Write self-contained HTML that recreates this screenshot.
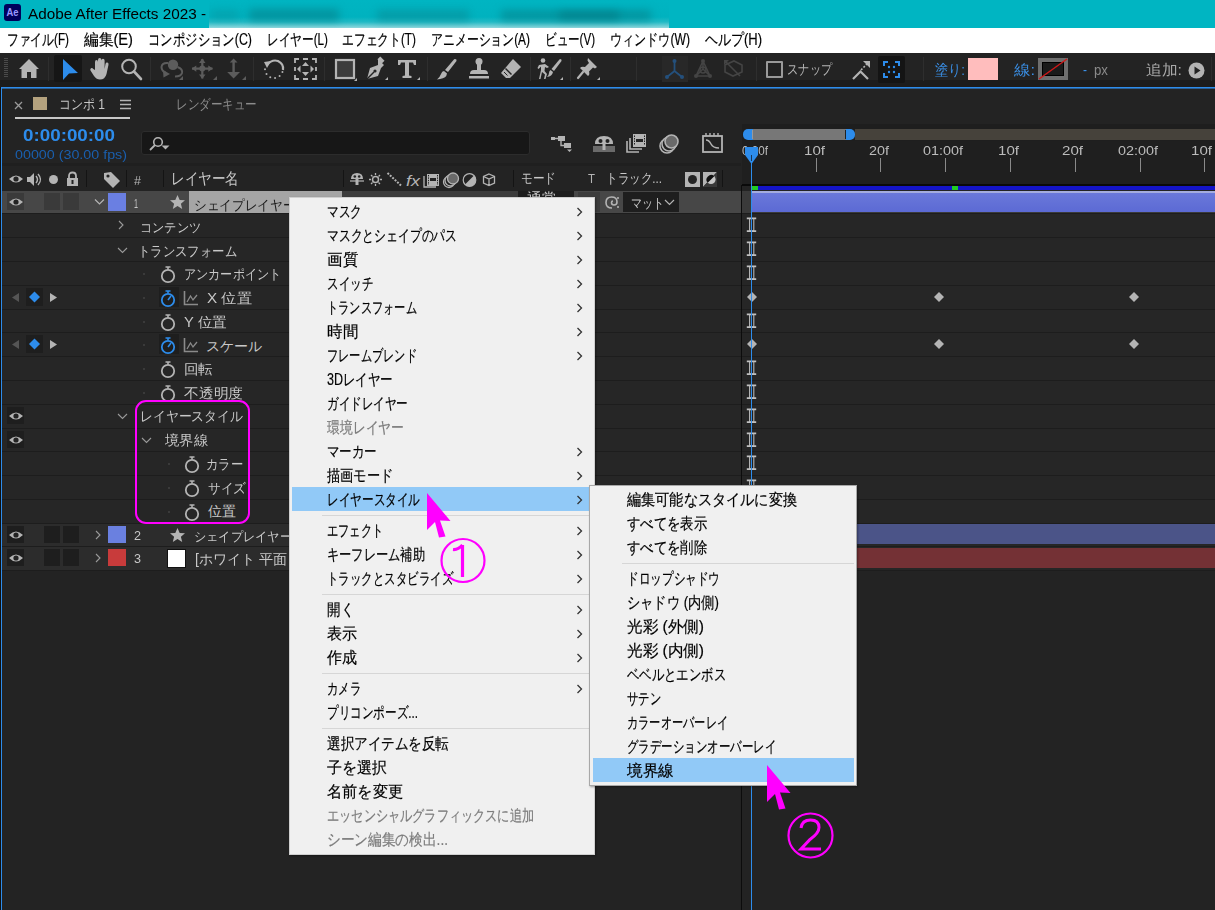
<!DOCTYPE html>
<html><head><meta charset="utf-8">
<style>
*{margin:0;padding:0;box-sizing:border-box}
html,body{width:1215px;height:910px;overflow:hidden;background:#232323;font-family:"Liberation Sans",sans-serif}
.a{position:absolute}
.t{position:absolute;white-space:nowrap;transform-origin:0 0}
svg{position:absolute;overflow:visible}
</style></head><body>
<div class="a" style="left:0px;top:0px;width:1215px;height:28px;background:#00b5c2;"></div>
<div class="a" style="left:4px;top:4px;width:17px;height:17px;background:#00005b;border-radius:3px"></div>
<svg class="a" style="left:4px;top:4px;" width="17" height="17" viewBox="0 0 17 17"><text x="8.5" y="12.3" text-anchor="middle" font-family="Liberation Sans" font-weight="bold" font-size="11" fill="#9999ff" textLength="12" lengthAdjust="spacingAndGlyphs">Ae</text></svg>
<div class="t" style="transform:scaleX(1.0181);left:28px;top:6px;font-size:15px;line-height:15px;color:#000;font-weight:normal;">Adobe After Effects 2023 -</div>
<div class="a" style="left:209px;top:0;width:460px;height:33px;overflow:hidden;background:linear-gradient(to bottom,#00b5c2 0px,#00b2bf 17px,#22bac5 22px,#7fd3d9 27px,#c8ecef 31px,#e6f6f7 33px)"><div class="a" style="left:2px;top:10px;width:28px;height:10px;background:#0a7f88;filter:blur(4px);opacity:.3"></div><div class="a" style="left:40px;top:9px;width:90px;height:12px;background:#067a84;filter:blur(4px);opacity:.55"></div><div class="a" style="left:168px;top:10px;width:92px;height:11px;background:#0a7f88;filter:blur(4px);opacity:.45"></div><div class="a" style="left:292px;top:10px;width:150px;height:11px;background:#057880;filter:blur(4px);opacity:.5"></div><div class="a" style="left:350px;top:11px;width:60px;height:9px;background:#03666e;filter:blur(4px);opacity:.4"></div></div>
<div class="a" style="left:0px;top:28px;width:1215px;height:25px;background:#ffffff;"></div>
<div class="t" style="transform:scaleX(0.7343);left:7px;top:31.5px;font-size:16px;line-height:16px;color:#000;font-weight:normal;-webkit-text-stroke:0.2px #000">ファイル(F)</div>
<div class="t" style="transform:scaleX(0.9188);left:84px;top:31.5px;font-size:16px;line-height:16px;color:#000;font-weight:normal;-webkit-text-stroke:0.2px #000">編集(E)</div>
<div class="t" style="transform:scaleX(0.7749);left:148px;top:31.5px;font-size:16px;line-height:16px;color:#000;font-weight:normal;-webkit-text-stroke:0.2px #000">コンポジション(C)</div>
<div class="t" style="transform:scaleX(0.7300);left:267px;top:31.5px;font-size:16px;line-height:16px;color:#000;font-weight:normal;-webkit-text-stroke:0.2px #000">レイヤー(L)</div>
<div class="t" style="transform:scaleX(0.7368);left:342px;top:31.5px;font-size:16px;line-height:16px;color:#000;font-weight:normal;-webkit-text-stroke:0.2px #000">エフェクト(T)</div>
<div class="t" style="transform:scaleX(0.7425);left:431px;top:31.5px;font-size:16px;line-height:16px;color:#000;font-weight:normal;-webkit-text-stroke:0.2px #000">アニメーション(A)</div>
<div class="t" style="transform:scaleX(0.7212);left:545px;top:31.5px;font-size:16px;line-height:16px;color:#000;font-weight:normal;-webkit-text-stroke:0.2px #000">ビュー(V)</div>
<div class="t" style="transform:scaleX(0.7564);left:610px;top:31.5px;font-size:16px;line-height:16px;color:#000;font-weight:normal;-webkit-text-stroke:0.2px #000">ウィンドウ(W)</div>
<div class="t" style="transform:scaleX(0.8117);left:705px;top:31.5px;font-size:16px;line-height:16px;color:#000;font-weight:normal;-webkit-text-stroke:0.2px #000">ヘルプ(H)</div>
<div class="a" style="left:0px;top:53px;width:1215px;height:27px;background:#232323;"></div>
<div class="a" style="left:0px;top:80px;width:1215px;height:7px;background:#1c1c1c;"></div>
<div class="a" style="left:48px;top:57px;width:1px;height:24px;background:#2e2e2e;"></div>
<div class="a" style="left:150px;top:57px;width:1px;height:24px;background:#2e2e2e;"></div>
<div class="a" style="left:253px;top:57px;width:1px;height:24px;background:#2e2e2e;"></div>
<div class="a" style="left:324px;top:57px;width:1px;height:24px;background:#2e2e2e;"></div>
<div class="a" style="left:427px;top:57px;width:1px;height:24px;background:#2e2e2e;"></div>
<div class="a" style="left:530px;top:57px;width:1px;height:24px;background:#2e2e2e;"></div>
<div class="a" style="left:570px;top:57px;width:1px;height:24px;background:#2e2e2e;"></div>
<div class="a" style="left:636px;top:57px;width:1px;height:24px;background:#2e2e2e;"></div>
<div class="a" style="left:756px;top:57px;width:1px;height:24px;background:#2e2e2e;"></div>
<div class="a" style="left:923px;top:57px;width:1px;height:24px;background:#2e2e2e;"></div>
<div class="a" style="left:1211px;top:57px;width:1px;height:24px;background:#2e2e2e;"></div>
<svg class="a" style="left:4px;top:57px;" width="5" height="22" viewBox="0 0 5 22"><rect x="0" y="1" width="4" height="1" fill="#4a4a4a"/><rect x="0" y="3" width="4" height="1" fill="#4a4a4a"/><rect x="0" y="5" width="4" height="1" fill="#4a4a4a"/><rect x="0" y="7" width="4" height="1" fill="#4a4a4a"/><rect x="0" y="9" width="4" height="1" fill="#4a4a4a"/><rect x="0" y="11" width="4" height="1" fill="#4a4a4a"/><rect x="0" y="13" width="4" height="1" fill="#4a4a4a"/><rect x="0" y="15" width="4" height="1" fill="#4a4a4a"/><rect x="0" y="17" width="4" height="1" fill="#4a4a4a"/><rect x="0" y="19" width="4" height="1" fill="#4a4a4a"/></svg>
<svg class="a" style="left:18px;top:58px;" width="22" height="22" viewBox="0 0 22 22"><path d="M11 1 L21 11 L18.5 11 L18.5 20 L13 20 L13 14 L9 14 L9 20 L3.5 20 L3.5 11 L1 11 Z" fill="#b4b4b4"/></svg>
<div class="a" style="left:54px;top:55px;width:28px;height:27px;background:#161616;border-radius:2px"></div>
<svg class="a" style="left:54px;top:55px;" width="28" height="27" viewBox="0 0 28 27"><path d="M9 4 L24 18 L15 18.5 L9 25 Z" fill="#2d8ceb"/></svg>
<svg class="a" style="left:89px;top:57px;" width="22" height="24" viewBox="0 0 22 24"><path d="M6 13 L6 5 Q6 3 7.5 3 Q9 3 9 5 L9 11 L9 3 Q9 1 10.7 1 Q12.4 1 12.4 3 L12.4 11 L12.4 3.5 Q12.4 1.8 14 1.8 Q15.6 1.8 15.6 3.5 L15.6 12 L16.5 7 Q17 5.3 18.4 5.6 Q19.8 6 19.5 7.8 L17.5 17 Q16 22.5 11 22.5 Q7.5 22.5 5 19 L1.5 13.5 Q0.8 12 2 11.3 Q3.3 10.7 4.3 12 Z" fill="#b4b4b4"/></svg>
<svg class="a" style="left:120px;top:57px;" width="23" height="24" viewBox="0 0 23 24"><circle cx="9" cy="9.5" r="6.8" fill="none" stroke="#b4b4b4" stroke-width="2"/><path d="M14 14.5 L21 22" stroke="#b4b4b4" stroke-width="2.6" stroke-linecap="round"/></svg>
<svg class="a" style="left:155px;top:53px;" width="32" height="30" viewBox="0 0 32 30"><circle cx="18" cy="11.7" r="5.2" fill="#5c5c5c"/><path d="M13 10 Q7 9.5 6.5 14 Q6.5 18 11 20" fill="none" stroke="#5c5c5c" stroke-width="2"/><path d="M8 17 L15 21 L8.5 24.5 Z" fill="#5c5c5c"/><path d="M22.5 14 Q28 16 27 20 Q26 23.5 20 23.5" fill="none" stroke="#5c5c5c" stroke-width="2"/><path d="M24 27 L28 27 L28 23 Z" fill="#5c5c5c"/></svg>
<svg class="a" style="left:190px;top:53px;" width="30" height="30" viewBox="0 0 30 30"><path d="M12.3 6 V25.5 M2 15.6 H22.5" stroke="#5c5c5c" stroke-width="2.2"/><path d="M12.3 5.5 L15.5 10 L9 10 Z M12.3 25.8 L15.5 21.5 L9 21.5 Z M1.8 15.6 L6.3 12.4 L6.3 18.8 Z M22.8 15.6 L18.3 12.4 L18.3 18.8 Z" fill="#5c5c5c"/><circle cx="12.3" cy="15.6" r="3" fill="#5c5c5c"/><path d="M23 27 L27 27 L27 23 Z" fill="#5c5c5c"/></svg>
<svg class="a" style="left:222px;top:53px;" width="28" height="30" viewBox="0 0 28 30"><path d="M11.6 8 V21" stroke="#5c5c5c" stroke-width="2.4"/><path d="M11.6 5.5 L15.5 9.5 L7.7 9.5 Z M11.6 25.5 L18 19 L5.2 19 Z" fill="#5c5c5c"/><path d="M20 27 L24 27 L24 23 Z" fill="#5c5c5c"/></svg>
<svg class="a" style="left:262px;top:57px;" width="25" height="24" viewBox="0 0 25 24"><path d="M5 8 Q10 2 16 4 Q22 7 21 13" fill="none" stroke="#b4b4b4" stroke-width="2.2"/><path d="M2 5 L9 4 L5 11 Z" fill="#b4b4b4"/><circle cx="20.454354415626412" cy="15.086080267099062" r="1" fill="#b4b4b4"/><circle cx="17.59448971443598" cy="19.04994218664735" r="1" fill="#b4b4b4"/><circle cx="13.084524924306299" cy="20.934416919338297" r="1" fill="#b4b4b4"/><circle cx="8.254678471075717" cy="20.183676841431136" r="1" fill="#b4b4b4"/><circle cx="4.529518182883002" cy="17.01915345652275" r="1" fill="#b4b4b4"/><circle cx="3.007783647540485" cy="12.374225961899615" r="1" fill="#b4b4b4"/></svg>
<svg class="a" style="left:294px;top:58px;" width="23" height="22" viewBox="0 0 23 22"><path d="M1 5 L1 1 L5 1 M9 1 L14 1 M18 1 L22 1 L22 5 M22 9 L22 13 M22 17 L22 21 L18 21 M14 21 L9 21 M5 21 L1 21 L1 17 M1 13 L1 9" fill="none" stroke="#b4b4b4" stroke-width="1.8"/><path d="M11.5 4 L15 8 L8 8 Z M11.5 18 L15 14 L8 14 Z M3 11 L6.5 7.5 L6.5 14.5 Z M20 11 L16.5 7.5 L16.5 14.5 Z" fill="#b4b4b4"/></svg>
<svg class="a" style="left:334px;top:58px;" width="25" height="24" viewBox="0 0 25 24"><rect x="2" y="2" width="18" height="18" fill="#3c3c3c" stroke="#b4b4b4" stroke-width="2.2"/><path d="M20 23 L23 23 L23 20 Z" fill="#b4b4b4"/></svg>
<svg class="a" style="left:364px;top:57px;" width="26" height="25" viewBox="0 0 26 25"><path d="M14 2 L20 8 L17 11 L14 19 L3 22 L6 11 L14 8 Z" fill="#b4b4b4"/><path d="M3 22 L10 15" stroke="#232323" stroke-width="1.4"/><circle cx="11" cy="14" r="1.6" fill="#232323"/><rect x="14" y="1" width="6" height="4" transform="rotate(45 17 3)" fill="#b4b4b4"/><path d="M21 23 L24 23 L24 20 Z" fill="#b4b4b4"/></svg>
<svg class="a" style="left:396px;top:57px;" width="26" height="25" viewBox="0 0 26 25"><path d="M2 3 L20 3 L20 8 L18 8 L17 5.5 L13 5.5 L13 18.5 L15.5 19 L15.5 21 L6.5 21 L6.5 19 L9 18.5 L9 5.5 L5 5.5 L4 8 L2 8 Z" fill="#b4b4b4"/><path d="M21 23 L24 23 L24 20 Z" fill="#b4b4b4"/></svg>
<svg class="a" style="left:436px;top:57px;" width="23" height="25" viewBox="0 0 23 25"><path d="M19 2 Q21 2 20.5 4 L12 15 L9 13 L17.5 3 Q18 2 19 2 Z" fill="#b4b4b4"/><path d="M8 14 L11 16.5 Q10.5 21 4 22 L1 22.5 Q4 20 5 17 Q6 14 8 14 Z" fill="#b4b4b4"/></svg>
<svg class="a" style="left:467px;top:57px;" width="24" height="24" viewBox="0 0 24 24"><circle cx="12" cy="4.5" r="3.5" fill="#b4b4b4"/><rect x="10" y="7" width="4" height="6" fill="#b4b4b4"/><path d="M3 17 Q3 13 7 13 L17 13 Q21 13 21 17 Z" fill="#b4b4b4"/><rect x="2" y="19" width="20" height="2.5" fill="#b4b4b4"/></svg>
<svg class="a" style="left:499px;top:57px;" width="24" height="24" viewBox="0 0 24 24"><path d="M14 2 L22 10 L11 21 L7 21 L2 16 Z" fill="#b4b4b4"/><path d="M6.5 11.5 L12.5 17.5" stroke="#232323" stroke-width="1.5"/><path d="M5 15 L8.5 18.5" stroke="#232323" stroke-width="1"/></svg>
<svg class="a" style="left:536px;top:57px;" width="29" height="25" viewBox="0 0 29 25"><circle cx="7" cy="3.5" r="2.3" fill="#b4b4b4"/><path d="M3 8 L9 7 L13 10 L11 11 L9 10 L8.5 14 L11 17 L9.5 22 L8 22 L9 17.5 L6 15 L4.5 22 L3 22 L5 13 L5 9.5 L2.5 12 L1.5 11 Z" fill="#b4b4b4"/><path d="M24 2 Q26 2 25.5 4 L18 14 L15.5 12 L23 3 Z" fill="#b4b4b4"/><path d="M14.5 13 L17 15 Q16 19.5 11 20 Q13 18 13 16 Q13 14 14.5 13 Z" fill="#b4b4b4"/><path d="M24 23 L27 23 L27 20 Z" fill="#b4b4b4"/></svg>
<svg class="a" style="left:576px;top:57px;" width="25" height="25" viewBox="0 0 25 25"><path d="M12 1 L21 10 L19 11.5 L17 10.5 L13 14.5 Q14 18 12 19 L4 11 Q5.5 9 9 10 L13 6 L11.5 3.5 Z" fill="#b4b4b4"/><path d="M7 15 L2 21" stroke="#b4b4b4" stroke-width="2.2" stroke-linecap="round"/><path d="M21 23 L24 23 L24 20 Z" fill="#b4b4b4"/></svg>
<div class="a" style="left:662px;top:56px;width:26px;height:26px;background:#282828;"></div>
<svg class="a" style="left:662px;top:56px;" width="26" height="26" viewBox="0 0 26 26"><path d="M12.5 5 L12.5 15 L5 21 M12.5 15 L20 21" stroke="#24507c" stroke-width="1.8" fill="none"/><circle cx="12.5" cy="5" r="2" fill="#24507c"/><circle cx="5" cy="21" r="2" fill="#24507c"/><circle cx="20" cy="21" r="2" fill="#24507c"/></svg>
<svg class="a" style="left:692px;top:57px;" width="23" height="24" viewBox="0 0 23 24"><path d="M11 4 L11 12 L4 19 M11 12 L18 19 M11 4 L4 19 L18 19 Z" stroke="#444" stroke-width="1.5" fill="none"/><circle cx="11" cy="4" r="2" fill="#444"/><circle cx="4" cy="19" r="2" fill="#444"/><circle cx="18" cy="19" r="2" fill="#444"/><circle cx="11" cy="13" r="3" fill="none" stroke="#444" stroke-width="1.5"/></svg>
<svg class="a" style="left:722px;top:57px;" width="22" height="24" viewBox="0 0 22 24"><path d="M3 8 L12 4 L20 8 L20 15 L11 19 L3 15 Z M3 4 L18 19" stroke="#444" stroke-width="1.6" fill="none"/><path d="M2 3 L7 3 L2 8 Z" fill="#444"/></svg>
<div class="a" style="left:766px;top:61px;width:17px;height:17px;background:transparent;border:2.5px solid #9a9a9a;border-radius:1px"></div>
<div class="t" style="transform:scaleX(0.8036);left:787px;top:62px;font-size:14px;line-height:14px;color:#b4b4b4;font-weight:normal;">スナップ</div>
<svg class="a" style="left:850px;top:59px;" width="22" height="22" viewBox="0 0 22 22"><path d="M3 20 L10.5 12.5 L18 20" stroke="#b4b4b4" stroke-width="2.2" fill="none"/><path d="M11 11 L18 4" stroke="#b4b4b4" stroke-width="1.6" stroke-dasharray="2 1.5"/><path d="M20 2 L20 9 L13 2 Z" fill="#b4b4b4"/></svg>
<div class="a" style="left:878px;top:56px;width:27px;height:27px;background:#141414;border-radius:2px"></div>
<svg class="a" style="left:878px;top:56px;" width="27" height="27" viewBox="0 0 27 27"><path d="M6 10 L6 6 L10 6 M17 6 L21 6 L21 10 M21 17 L21 21 L17 21 M10 21 L6 21 L6 17" stroke="#2d8ceb" stroke-width="2" fill="none"/><circle cx="11" cy="11" r="1.2" fill="#2d8ceb"/><circle cx="16" cy="11" r="1.2" fill="#2d8ceb"/><circle cx="11" cy="16" r="1.2" fill="#2d8ceb"/><circle cx="16" cy="16" r="1.2" fill="#2d8ceb"/></svg>
<div class="t" style="transform:scaleX(0.8779);left:935px;top:62px;font-size:15px;line-height:15px;color:#3a8fe6;font-weight:normal;">塗り:</div>
<div class="a" style="left:968px;top:58px;width:30px;height:22px;background:#ffbdbd;"></div>
<div class="t" style="transform:scaleX(1.0954);left:1014px;top:62px;font-size:15px;line-height:15px;color:#3a8fe6;font-weight:normal;">線:</div>
<div class="a" style="left:1038px;top:58px;width:30px;height:22px;background:#6e6e6e;"></div>
<div class="a" style="left:1042px;top:62px;width:22px;height:14px;background:#1a1a1a;border:1px solid #000"></div>
<svg class="a" style="left:1038px;top:58px;" width="30" height="22" viewBox="0 0 30 22"><path d="M1 21 L29 1" stroke="#d01818" stroke-width="1.4"/></svg>
<div class="t" style="transform:scaleX(0.8562);left:1083px;top:63px;font-size:14px;line-height:14px;color:#3a8fe6;font-weight:normal;">-</div>
<div class="t" style="transform:scaleX(0.9461);left:1094px;top:63px;font-size:14px;line-height:14px;color:#8a8a8a;font-weight:normal;">px</div>
<div class="t" style="transform:scaleX(1.0535);left:1146px;top:62px;font-size:15px;line-height:15px;color:#a8a8a8;font-weight:normal;">追加:</div>
<svg class="a" style="left:1188px;top:62px;" width="17" height="17" viewBox="0 0 17 17"><circle cx="8.5" cy="8.5" r="8" fill="#b4b4b4"/><path d="M6.5 4.5 L12.5 8.5 L6.5 12.5 Z" fill="#232323"/></svg>
<div class="a" style="left:0px;top:87px;width:1215px;height:1px;background:#2d8ceb;"></div>
<div class="a" style="left:0px;top:88px;width:1215px;height:1px;background:#2a5f94;"></div>
<div class="a" style="left:0px;top:87px;width:1px;height:823px;background:#101010;"></div>
<div class="a" style="left:1px;top:87px;width:1px;height:823px;background:#2d8ceb;"></div>
<svg class="a" style="left:14px;top:101px;" width="9" height="9" viewBox="0 0 9 9"><path d="M1 1 L8 8 M8 1 L1 8" stroke="#9a9a9a" stroke-width="1.3"/></svg>
<div class="a" style="left:33px;top:97px;width:14px;height:13px;background:#b4a27e;"></div>
<div class="t" style="transform:scaleX(0.8568);left:59px;top:97px;font-size:14px;line-height:14px;color:#c8c8c8;font-weight:normal;">コンポ 1</div>
<svg class="a" style="left:120px;top:99px;" width="11" height="11" viewBox="0 0 11 11"><path d="M0 1.5 H11 M0 5.5 H11 M0 9.5 H11" stroke="#b4b4b4" stroke-width="1.6"/></svg>
<div class="a" style="left:15px;top:117px;width:115px;height:2px;background:#c8c8c8;"></div>
<div class="t" style="transform:scaleX(0.8265);left:176px;top:97px;font-size:14px;line-height:14px;color:#8c8c8c;font-weight:normal;">レンダーキュー</div>
<div class="t" style="transform:scaleX(1.1061);left:23px;top:127px;font-size:17px;line-height:17px;color:#2d8ceb;font-weight:bold;">0:00:00:00</div>
<div class="t" style="transform:scaleX(1.0990);left:15px;top:148px;font-size:13px;line-height:13px;color:#1a5fae;font-weight:normal;">00000 (30.00 fps)</div>
<div class="a" style="left:141px;top:131px;width:389px;height:24px;background:#171717;border-radius:3px;border:1px solid #2c2c2c"></div>
<svg class="a" style="left:148px;top:136px;" width="24" height="16" viewBox="0 0 24 16"><circle cx="10" cy="6" r="4.3" fill="none" stroke="#b4b4b4" stroke-width="1.6"/><path d="M7 9 L2 14" stroke="#b4b4b4" stroke-width="1.8"/><path d="M13.5 9.5 L21.5 9.5 L17.5 13.5 Z" fill="#b4b4b4"/></svg>
<svg class="a" style="left:550px;top:134px;" width="25" height="20" viewBox="0 0 25 20"><rect x="1" y="3" width="4" height="3" fill="#b4b4b4"/><rect x="8" y="2" width="7" height="5" fill="#b4b4b4"/><rect x="14" y="9" width="7" height="5" fill="#b4b4b4"/><path d="M5 4.5 L8 4.5 M11 7 L11 11.5 L14 11.5" stroke="#b4b4b4" stroke-width="1.4" fill="none"/><path d="M17 15.5 L22 15.5 L19.5 18 Z" fill="#b4b4b4"/></svg>
<svg class="a" style="left:592px;top:134px;" width="24" height="20" viewBox="0 0 24 20"><path d="M3 10 Q3 2 12 2 Q21 2 21 10 Z" fill="#b4b4b4"/><circle cx="8.5" cy="7" r="2" fill="#232323"/><circle cx="15.5" cy="7" r="2" fill="#232323"/><rect x="10.5" y="9" width="3" height="6" fill="#b4b4b4"/><rect x="1" y="12" width="22" height="6" fill="#6a6a6a"/><rect x="10.5" y="12" width="3" height="4" fill="#b4b4b4"/></svg>
<svg class="a" style="left:626px;top:133px;" width="22" height="20" viewBox="0 0 22 20"><path d="M1 8 L1 19 L13 19" stroke="#b4b4b4" stroke-width="1.6" fill="none"/><path d="M4 5 L4 16 L16 16" stroke="#b4b4b4" stroke-width="1.6" fill="none"/><rect x="7" y="1" width="13" height="13" fill="#b4b4b4"/><rect x="10" y="6" width="7" height="3" fill="#232323"/><path d="M8.5 2.5 V12.5 M18.5 2.5 V12.5" stroke="#232323" stroke-width="1" stroke-dasharray="1.5 1"/></svg>
<svg class="a" style="left:658px;top:134px;" width="22" height="20" viewBox="0 0 22 20"><circle cx="9" cy="12" r="7" fill="none" stroke="#b4b4b4" stroke-width="1.6"/><circle cx="11" cy="10" r="7" fill="#232323" stroke="#b4b4b4" stroke-width="1.6"/><circle cx="13.5" cy="7.5" r="6.5" fill="#6a6a6a" stroke="#b4b4b4" stroke-width="1.6"/></svg>
<svg class="a" style="left:701px;top:132px;" width="23" height="22" viewBox="0 0 23 22"><rect x="2" y="4" width="19" height="16" fill="none" stroke="#b4b4b4" stroke-width="1.8"/><path d="M5 1 V4 M9 1 V4 M13 1 V4 M17 1 V4" stroke="#b4b4b4" stroke-width="1.4"/><path d="M5 8 Q8 8 10 12 Q12 16 18 16" stroke="#b4b4b4" stroke-width="1.5" fill="none"/></svg>
<div class="a" style="left:2px;top:163px;width:739px;height:3px;background:#1f1f1f;"></div>
<div class="a" style="left:86px;top:170px;width:1px;height:17px;background:#141414;"></div>
<div class="a" style="left:126px;top:170px;width:1px;height:17px;background:#141414;"></div>
<div class="a" style="left:163px;top:170px;width:1px;height:17px;background:#141414;"></div>
<div class="a" style="left:343px;top:170px;width:1px;height:17px;background:#141414;"></div>
<div class="a" style="left:513px;top:170px;width:1px;height:17px;background:#141414;"></div>
<div class="a" style="left:722px;top:170px;width:1px;height:17px;background:#141414;"></div>
<svg class="a" style="left:8px;top:172px;" width="16" height="14" viewBox="0 0 16 14"><path d="M1 7 Q8 0 15 7 Q8 14 1 7 Z" fill="#b4b4b4"/><circle cx="8" cy="7" r="2.6" fill="#232323"/></svg>
<svg class="a" style="left:26px;top:171px;" width="17" height="17" viewBox="0 0 17 17"><path d="M1 6 L4 6 L8 2 L8 15 L4 11 L1 11 Z" fill="#b4b4b4"/><path d="M10 5 Q13 8.5 10 12 M12 3 Q17 8.5 12 14" stroke="#b4b4b4" stroke-width="1.4" fill="none"/></svg>
<svg class="a" style="left:48px;top:174px;" width="11" height="11" viewBox="0 0 11 11"><circle cx="5.5" cy="5.5" r="4.5" fill="#b4b4b4"/></svg>
<svg class="a" style="left:65px;top:171px;" width="15" height="16" viewBox="0 0 15 16"><path d="M4 7 V5 Q4 1.5 7.5 1.5 Q11 1.5 11 5 V7" stroke="#b4b4b4" stroke-width="1.8" fill="none"/><rect x="2" y="7" width="11" height="8" fill="#b4b4b4"/><rect x="6.5" y="9" width="2" height="4" fill="#232323"/></svg>
<svg class="a" style="left:103px;top:171px;" width="18" height="17" viewBox="0 0 18 17"><path d="M1 2 L8 1 L17 10 L10 17 L1 8 Z" fill="#b4b4b4"/><circle cx="5" cy="5" r="1.6" fill="#232323"/></svg>
<div class="t" style="transform:scaleX(1.0467);left:134px;top:175px;font-size:12px;line-height:12px;color:#b4b4b4;font-weight:normal;">#</div>
<div class="t" style="transform:scaleX(0.8500);left:171px;top:171px;font-size:16px;line-height:16px;color:#c8c8c8;font-weight:normal;">レイヤー名</div>
<svg class="a" style="left:349px;top:172px;" width="150" height="16" viewBox="0 0 150 16">
<path d="M2 7 Q2 1 8 1 Q14 1 14 7 Z" fill="#b4b4b4"/><circle cx="5.8" cy="4.5" r="1.3" fill="#232323"/><circle cx="10.2" cy="4.5" r="1.3" fill="#232323"/><rect x="6.5" y="7" width="3" height="6" fill="#b4b4b4"/><path d="M1 9 H15" stroke="#b4b4b4" stroke-width="1.2"/>
<circle cx="26.5" cy="7.5" r="3" fill="none" stroke="#b4b4b4" stroke-width="1.5"/><path d="M26.5 1 V3 M26.5 12 V14 M20 7.5 H22 M31 7.5 H33 M22 3 L23.5 4.5 M29.5 10.5 L31 12 M31 3 L29.5 4.5 M23.5 10.5 L22 12" stroke="#b4b4b4" stroke-width="1.3"/>
<path d="M38.5 1 L52 13.5" stroke="#b4b4b4" stroke-width="2" stroke-dasharray="2 1.3"/>
<text x="57" y="13.5" font-family="Liberation Sans" font-style="italic" font-size="15.5" fill="#b4b4b4" textLength="14" lengthAdjust="spacingAndGlyphs">fx</text>
<rect x="78" y="2" width="12" height="12" fill="#b4b4b4"/><path d="M75 4 V15 H87" stroke="#b4b4b4" stroke-width="1.3" fill="none"/><rect x="81" y="6" width="6" height="3" fill="#232323"/><path d="M79.5 3 V13 M88.5 3 V13" stroke="#232323" stroke-width="1" stroke-dasharray="1.4 1"/>
<circle cx="100" cy="10" r="5.5" fill="none" stroke="#b4b4b4" stroke-width="1.3"/><circle cx="101.5" cy="8.5" r="5.5" fill="#232323" stroke="#b4b4b4" stroke-width="1.3"/><circle cx="104" cy="6.5" r="5.5" fill="#6a6a6a" stroke="#b4b4b4" stroke-width="1.3"/>
<circle cx="120.5" cy="8" r="6.3" fill="#b4b4b4"/><path d="M116 12.5 L125 3.5 A6.3 6.3 0 0 0 116 12.5 Z" fill="#232323"/><circle cx="120.5" cy="8" r="6.3" fill="none" stroke="#b4b4b4" stroke-width="1.2"/>
<path d="M140 2 L145.5 4.5 L145.5 11 L140 13.5 L134.5 11 L134.5 4.5 Z M134.5 4.5 L140 7 L145.5 4.5 M140 7 V13.5" stroke="#b4b4b4" stroke-width="1.3" fill="none"/>
</svg>
<div class="t" style="transform:scaleX(0.8333);left:521px;top:171px;font-size:14px;line-height:14px;color:#c8c8c8;font-weight:normal;">モード</div>
<div class="t" style="transform:scaleX(0.8802);left:588px;top:172px;font-size:13px;line-height:13px;color:#b4b4b4;font-weight:normal;">T</div>
<div class="t" style="transform:scaleX(0.8275);left:606px;top:171px;font-size:14px;line-height:14px;color:#c8c8c8;font-weight:normal;">トラック...</div>
<div class="a" style="left:685px;top:172px;width:15px;height:15px;background:#b4b4b4;"></div>
<svg class="a" style="left:685px;top:172px;" width="15" height="15" viewBox="0 0 15 15"><circle cx="7.5" cy="7.5" r="4.5" fill="#232323"/></svg>
<svg class="a" style="left:703px;top:172px;" width="15" height="15" viewBox="0 0 15 15"><path d="M0 0 H14 L0 15 Z" fill="#b4b4b4"/><path d="M0 15 L14 0 V15 Z" fill="#3a3a3a"/><circle cx="8" cy="7.5" r="4.6" fill="#c8c8c8"/><path d="M4.75 10.75 A4.6 4.6 0 0 1 11.25 4.25 Z" fill="#111"/></svg>
<div class="a" style="left:2px;top:191px;width:739px;height:22px;background:#474747;"></div>
<div class="a" style="left:742px;top:191px;width:473px;height:22px;background:#262626;"></div>
<div class="a" style="left:2px;top:213px;width:1213px;height:1px;background:#1d1d1d;"></div>
<div class="a" style="left:2px;top:214px;width:739px;height:23px;background:#262626;"></div>
<div class="a" style="left:742px;top:214px;width:473px;height:23px;background:#262626;"></div>
<div class="a" style="left:2px;top:237px;width:1213px;height:1px;background:#1d1d1d;"></div>
<div class="a" style="left:2px;top:238px;width:739px;height:23px;background:#262626;"></div>
<div class="a" style="left:742px;top:238px;width:473px;height:23px;background:#262626;"></div>
<div class="a" style="left:2px;top:261px;width:1213px;height:1px;background:#1d1d1d;"></div>
<div class="a" style="left:2px;top:262px;width:739px;height:23px;background:#262626;"></div>
<div class="a" style="left:742px;top:262px;width:473px;height:23px;background:#262626;"></div>
<div class="a" style="left:2px;top:285px;width:1213px;height:1px;background:#1d1d1d;"></div>
<div class="a" style="left:2px;top:286px;width:739px;height:23px;background:#262626;"></div>
<div class="a" style="left:742px;top:286px;width:473px;height:23px;background:#262626;"></div>
<div class="a" style="left:2px;top:309px;width:1213px;height:1px;background:#1d1d1d;"></div>
<div class="a" style="left:2px;top:310px;width:739px;height:22px;background:#262626;"></div>
<div class="a" style="left:742px;top:310px;width:473px;height:22px;background:#262626;"></div>
<div class="a" style="left:2px;top:332px;width:1213px;height:1px;background:#1d1d1d;"></div>
<div class="a" style="left:2px;top:333px;width:739px;height:23px;background:#262626;"></div>
<div class="a" style="left:742px;top:333px;width:473px;height:23px;background:#262626;"></div>
<div class="a" style="left:2px;top:356px;width:1213px;height:1px;background:#1d1d1d;"></div>
<div class="a" style="left:2px;top:357px;width:739px;height:23px;background:#262626;"></div>
<div class="a" style="left:742px;top:357px;width:473px;height:23px;background:#262626;"></div>
<div class="a" style="left:2px;top:380px;width:1213px;height:1px;background:#1d1d1d;"></div>
<div class="a" style="left:2px;top:381px;width:739px;height:23px;background:#262626;"></div>
<div class="a" style="left:742px;top:381px;width:473px;height:23px;background:#262626;"></div>
<div class="a" style="left:2px;top:404px;width:1213px;height:1px;background:#1d1d1d;"></div>
<div class="a" style="left:2px;top:405px;width:739px;height:23px;background:#262626;"></div>
<div class="a" style="left:742px;top:405px;width:473px;height:23px;background:#262626;"></div>
<div class="a" style="left:2px;top:428px;width:1213px;height:1px;background:#1d1d1d;"></div>
<div class="a" style="left:2px;top:429px;width:739px;height:22px;background:#262626;"></div>
<div class="a" style="left:742px;top:429px;width:473px;height:22px;background:#262626;"></div>
<div class="a" style="left:2px;top:451px;width:1213px;height:1px;background:#1d1d1d;"></div>
<div class="a" style="left:2px;top:452px;width:739px;height:23px;background:#262626;"></div>
<div class="a" style="left:742px;top:452px;width:473px;height:23px;background:#262626;"></div>
<div class="a" style="left:2px;top:475px;width:1213px;height:1px;background:#1d1d1d;"></div>
<div class="a" style="left:2px;top:476px;width:739px;height:23px;background:#262626;"></div>
<div class="a" style="left:742px;top:476px;width:473px;height:23px;background:#262626;"></div>
<div class="a" style="left:2px;top:499px;width:1213px;height:1px;background:#1d1d1d;"></div>
<div class="a" style="left:2px;top:500px;width:739px;height:23px;background:#262626;"></div>
<div class="a" style="left:742px;top:500px;width:473px;height:23px;background:#262626;"></div>
<div class="a" style="left:2px;top:523px;width:1213px;height:1px;background:#1d1d1d;"></div>
<div class="a" style="left:2px;top:524px;width:739px;height:22px;background:#2c2c2c;"></div>
<div class="a" style="left:742px;top:524px;width:473px;height:22px;background:#262626;"></div>
<div class="a" style="left:2px;top:546px;width:1213px;height:1px;background:#1d1d1d;"></div>
<div class="a" style="left:2px;top:547px;width:739px;height:23px;background:#2c2c2c;"></div>
<div class="a" style="left:742px;top:547px;width:473px;height:23px;background:#262626;"></div>
<div class="a" style="left:2px;top:570px;width:1213px;height:1px;background:#1d1d1d;"></div>
<div class="a" style="left:741px;top:185px;width:1px;height:725px;background:#0c0c0c;"></div>
<div class="a" style="left:7px;top:193px;width:17px;height:17px;background:#3a3a3a;"></div>
<svg class="a" style="left:8px;top:196px;" width="16" height="12" viewBox="0 0 16 12"><path d="M1 6 Q8 -1 15 6 Q8 13 1 6 Z" fill="#b4b4b4"/><circle cx="8" cy="6" r="2.6" fill="#232323"/></svg>
<div class="a" style="left:44px;top:193px;width:16px;height:17px;background:#3a3a3a;"></div>
<div class="a" style="left:63px;top:193px;width:16px;height:17px;background:#3a3a3a;"></div>
<svg class="a" style="left:94px;top:198px;" width="11" height="8" viewBox="0 0 11 8"><path d="M1 1.5 L5.5 6 L10 1.5" stroke="#b4b4b4" stroke-width="1.2" fill="none"/></svg>
<div class="a" style="left:108px;top:193px;width:18px;height:18px;background:#6a7fe2;"></div>
<div class="t" style="transform:scaleX(0.5529);left:134px;top:197px;font-size:13px;line-height:13px;color:#c8c8c8;font-weight:normal;">1</div>
<svg class="a" style="left:169px;top:194px;" width="17" height="16" viewBox="0 0 17 16"><path d="M8.5 1 L10.7 6 L16 6.3 L11.9 9.8 L13.2 15 L8.5 12.1 L3.8 15 L5.1 9.8 L1 6.3 L6.3 6 Z" fill="#b4b4b4"/></svg>
<div class="a" style="left:189px;top:191px;width:153px;height:22px;background:#a5a5a5;"></div>
<div class="t" style="transform:scaleX(0.9055);left:194px;top:198px;font-size:14px;line-height:14px;color:#1a1a1a;font-weight:normal;">シェイプレイヤー 1</div>
<div class="a" style="left:342px;top:191px;width:176px;height:22px;background:#3c3c3c;"></div>
<div class="a" style="left:518px;top:191px;width:56px;height:22px;background:#1e1e1e;"></div>
<div class="t" style="transform:scaleX(1.1538);left:527px;top:191px;font-size:13px;line-height:13px;color:#c8c8c8;font-weight:normal;">通常</div>
<div class="a" style="left:578px;top:192px;width:22px;height:20px;background:#3c3c3c;"></div>
<svg class="a" style="left:603px;top:194px;" width="17" height="17" viewBox="0 0 17 17"><path d="M9 14 Q3 14 3 8.5 Q3 3 8.5 3 Q14 3 14 8 Q14 11 11 11 Q8.5 11 8.5 8.5 Q8.5 7 10 7" stroke="#b4b4b4" stroke-width="1.6" fill="none"/><circle cx="15" cy="4" r="1" fill="#b4b4b4"/><circle cx="15" cy="13" r="1" fill="#b4b4b4"/></svg>
<div class="a" style="left:623px;top:192px;width:56px;height:20px;background:#1e1e1e;"></div>
<div class="t" style="transform:scaleX(0.7857);left:631px;top:196px;font-size:14px;line-height:14px;color:#c8c8c8;font-weight:normal;">マット</div>
<svg class="a" style="left:664px;top:199px;" width="11" height="7" viewBox="0 0 11 7"><path d="M1 1 L5.5 5.5 L10 1" stroke="#b4b4b4" stroke-width="1.2" fill="none"/></svg>
<svg class="a" style="left:118px;top:220px;" width="6" height="10" viewBox="0 0 6 10"><path d="M1 1 L5 5 L1 9" stroke="#9a9a9a" stroke-width="1.1" fill="none"/></svg>
<div class="t" style="transform:scaleX(0.9385);left:140px;top:221px;font-size:13px;line-height:13px;color:#c8c8c8;font-weight:normal;">コンテンツ</div>
<svg class="a" style="left:117px;top:247px;" width="11" height="7" viewBox="0 0 11 7"><path d="M1 1 L5.5 5.5 L10 1" stroke="#9a9a9a" stroke-width="1.1" fill="none"/></svg>
<div class="t" style="transform:scaleX(0.8839);left:138px;top:244px;font-size:14px;line-height:14px;color:#c8c8c8;font-weight:normal;">トランスフォーム</div>
<div class="a" style="left:143px;top:273px;width:2px;height:2px;background:#3a3a3a;"></div>
<svg class="a" style="left:160px;top:265px;" width="17" height="19" viewBox="0 0 17 19"><circle cx="8" cy="11" r="6.2" fill="none" stroke="#b4b4b4" stroke-width="1.8"/><path d="M5.5 2 H10.5 M8 2 V4.5" stroke="#b4b4b4" stroke-width="1.6"/></svg>
<div class="t" style="transform:scaleX(0.8661);left:184px;top:267px;font-size:14px;line-height:14px;color:#c8c8c8;font-weight:normal;">アンカーポイント</div>
<svg class="a" style="left:10px;top:292px;" width="10" height="11" viewBox="0 0 10 11"><path d="M9 1 L2 5.5 L9 10 Z" fill="#555"/></svg>
<div class="a" style="left:26px;top:288px;width:17px;height:18px;background:#1e1e1e;"></div>
<svg class="a" style="left:26px;top:288px;" width="17" height="18" viewBox="0 0 17 18"><path d="M8.5 3.5 L14 9 L8.5 14.5 L3 9 Z" fill="#2d8ceb"/></svg>
<svg class="a" style="left:49px;top:292px;" width="10" height="11" viewBox="0 0 10 11"><path d="M1 1 L8 5.5 L1 10 Z" fill="#b4b4b4"/></svg>
<div class="a" style="left:143px;top:297px;width:2px;height:2px;background:#3a3a3a;"></div>
<div class="a" style="left:159px;top:287px;width:20px;height:20px;background:#1e1e1e;"></div>
<svg class="a" style="left:160px;top:289px;" width="17" height="19" viewBox="0 0 17 19"><circle cx="8" cy="11" r="6.2" fill="none" stroke="#2d8ceb" stroke-width="1.8"/><path d="M5.5 2 H10.5 M8 2 V4.5" stroke="#2d8ceb" stroke-width="1.6"/><path d="M8 11 L11 7" stroke="#2d8ceb" stroke-width="1.6"/></svg>
<svg class="a" style="left:183px;top:290px;" width="16" height="16" viewBox="0 0 16 16"><path d="M1.5 1 V14.5 H15" stroke="#8a8a8a" stroke-width="1.6" fill="none"/><path d="M4 12 L7.5 6 L10 10 L14 5" stroke="#8a8a8a" stroke-width="1.3" fill="none"/></svg>
<div class="t" style="transform:scaleX(1.0913);left:207px;top:291px;font-size:14px;line-height:14px;color:#c8c8c8;font-weight:normal;">X 位置</div>
<div class="a" style="left:143px;top:321px;width:2px;height:2px;background:#3a3a3a;"></div>
<svg class="a" style="left:160px;top:313px;" width="17" height="19" viewBox="0 0 17 19"><circle cx="8" cy="11" r="6.2" fill="none" stroke="#b4b4b4" stroke-width="1.8"/><path d="M5.5 2 H10.5 M8 2 V4.5" stroke="#b4b4b4" stroke-width="1.6"/></svg>
<div class="t" style="transform:scaleX(1.0492);left:184px;top:315px;font-size:14px;line-height:14px;color:#c8c8c8;font-weight:normal;">Y 位置</div>
<svg class="a" style="left:10px;top:339px;" width="10" height="11" viewBox="0 0 10 11"><path d="M9 1 L2 5.5 L9 10 Z" fill="#555"/></svg>
<div class="a" style="left:26px;top:335px;width:17px;height:18px;background:#1e1e1e;"></div>
<svg class="a" style="left:26px;top:335px;" width="17" height="18" viewBox="0 0 17 18"><path d="M8.5 3.5 L14 9 L8.5 14.5 L3 9 Z" fill="#2d8ceb"/></svg>
<svg class="a" style="left:49px;top:339px;" width="10" height="11" viewBox="0 0 10 11"><path d="M1 1 L8 5.5 L1 10 Z" fill="#b4b4b4"/></svg>
<div class="a" style="left:143px;top:344px;width:2px;height:2px;background:#3a3a3a;"></div>
<div class="a" style="left:159px;top:334px;width:20px;height:20px;background:#1e1e1e;"></div>
<svg class="a" style="left:160px;top:336px;" width="17" height="19" viewBox="0 0 17 19"><circle cx="8" cy="11" r="6.2" fill="none" stroke="#2d8ceb" stroke-width="1.8"/><path d="M5.5 2 H10.5 M8 2 V4.5" stroke="#2d8ceb" stroke-width="1.6"/><path d="M8 11 L11 7" stroke="#2d8ceb" stroke-width="1.6"/></svg>
<svg class="a" style="left:183px;top:337px;" width="16" height="16" viewBox="0 0 16 16"><path d="M1.5 1 V14.5 H15" stroke="#8a8a8a" stroke-width="1.6" fill="none"/><path d="M4 12 L7.5 6 L10 10 L14 5" stroke="#8a8a8a" stroke-width="1.3" fill="none"/></svg>
<div class="t" style="transform:scaleX(1.0000);left:206px;top:339px;font-size:14px;line-height:14px;color:#c8c8c8;font-weight:normal;">スケール</div>
<div class="a" style="left:143px;top:368px;width:2px;height:2px;background:#3a3a3a;"></div>
<svg class="a" style="left:160px;top:360px;" width="17" height="19" viewBox="0 0 17 19"><circle cx="8" cy="11" r="6.2" fill="none" stroke="#b4b4b4" stroke-width="1.8"/><path d="M5.5 2 H10.5 M8 2 V4.5" stroke="#b4b4b4" stroke-width="1.6"/></svg>
<div class="t" style="transform:scaleX(1.0357);left:184px;top:362px;font-size:14px;line-height:14px;color:#c8c8c8;font-weight:normal;">回転</div>
<div class="a" style="left:143px;top:392px;width:2px;height:2px;background:#3a3a3a;"></div>
<svg class="a" style="left:160px;top:384px;" width="17" height="19" viewBox="0 0 17 19"><circle cx="8" cy="11" r="6.2" fill="none" stroke="#b4b4b4" stroke-width="1.8"/><path d="M5.5 2 H10.5 M8 2 V4.5" stroke="#b4b4b4" stroke-width="1.6"/></svg>
<div class="t" style="transform:scaleX(1.0536);left:184px;top:386px;font-size:14px;line-height:14px;color:#c8c8c8;font-weight:normal;">不透明度</div>
<div class="a" style="left:7px;top:407px;width:17px;height:17px;background:#1e1e1e;"></div>
<svg class="a" style="left:8px;top:410px;" width="16" height="12" viewBox="0 0 16 12"><path d="M1 6 Q8 -1 15 6 Q8 13 1 6 Z" fill="#b4b4b4"/><circle cx="8" cy="6" r="2.6" fill="#232323"/></svg>
<svg class="a" style="left:117px;top:413px;" width="11" height="7" viewBox="0 0 11 7"><path d="M1 1 L5.5 5.5 L10 1" stroke="#9a9a9a" stroke-width="1.1" fill="none"/></svg>
<div class="t" style="transform:scaleX(0.9196);left:140px;top:409px;font-size:14px;line-height:14px;color:#c8c8c8;font-weight:normal;">レイヤースタイル</div>
<div class="a" style="left:7px;top:431px;width:17px;height:17px;background:#1e1e1e;"></div>
<svg class="a" style="left:8px;top:434px;" width="16" height="12" viewBox="0 0 16 12"><path d="M1 6 Q8 -1 15 6 Q8 13 1 6 Z" fill="#b4b4b4"/><circle cx="8" cy="6" r="2.6" fill="#232323"/></svg>
<svg class="a" style="left:141px;top:437px;" width="11" height="7" viewBox="0 0 11 7"><path d="M1 1 L5.5 5.5 L10 1" stroke="#9a9a9a" stroke-width="1.1" fill="none"/></svg>
<div class="t" style="transform:scaleX(1.0238);left:165px;top:433px;font-size:14px;line-height:14px;color:#c8c8c8;font-weight:normal;">境界線</div>
<div class="a" style="left:168px;top:463px;width:2px;height:2px;background:#3a3a3a;"></div>
<svg class="a" style="left:184px;top:455px;" width="17" height="19" viewBox="0 0 17 19"><circle cx="8" cy="11" r="6.2" fill="none" stroke="#b4b4b4" stroke-width="1.8"/><path d="M5.5 2 H10.5 M8 2 V4.5" stroke="#b4b4b4" stroke-width="1.6"/></svg>
<div class="t" style="transform:scaleX(0.8810);left:206px;top:457px;font-size:14px;line-height:14px;color:#c8c8c8;font-weight:normal;">カラー</div>
<div class="a" style="left:168px;top:487px;width:2px;height:2px;background:#3a3a3a;"></div>
<svg class="a" style="left:184px;top:479px;" width="17" height="19" viewBox="0 0 17 19"><circle cx="8" cy="11" r="6.2" fill="none" stroke="#b4b4b4" stroke-width="1.8"/><path d="M5.5 2 H10.5 M8 2 V4.5" stroke="#b4b4b4" stroke-width="1.6"/></svg>
<div class="t" style="transform:scaleX(0.9048);left:208px;top:481px;font-size:14px;line-height:14px;color:#c8c8c8;font-weight:normal;">サイズ</div>
<div class="a" style="left:168px;top:511px;width:2px;height:2px;background:#3a3a3a;"></div>
<svg class="a" style="left:184px;top:503px;" width="17" height="19" viewBox="0 0 17 19"><circle cx="8" cy="11" r="6.2" fill="none" stroke="#b4b4b4" stroke-width="1.8"/><path d="M5.5 2 H10.5 M8 2 V4.5" stroke="#b4b4b4" stroke-width="1.6"/></svg>
<div class="t" style="transform:scaleX(1.0000);left:208px;top:504px;font-size:14px;line-height:14px;color:#c8c8c8;font-weight:normal;">位置</div>
<div class="a" style="left:7px;top:526px;width:17px;height:17px;background:#1e1e1e;"></div>
<svg class="a" style="left:8px;top:529px;" width="16" height="12" viewBox="0 0 16 12"><path d="M1 6 Q8 -1 15 6 Q8 13 1 6 Z" fill="#b4b4b4"/><circle cx="8" cy="6" r="2.6" fill="#232323"/></svg>
<div class="a" style="left:44px;top:526px;width:16px;height:17px;background:#1e1e1e;"></div>
<div class="a" style="left:63px;top:526px;width:16px;height:17px;background:#1e1e1e;"></div>
<svg class="a" style="left:95px;top:530px;" width="6" height="10" viewBox="0 0 6 10"><path d="M1 1 L5 5 L1 9" stroke="#9a9a9a" stroke-width="1.1" fill="none"/></svg>
<div class="a" style="left:108px;top:526px;width:18px;height:17px;background:#6a80e0;"></div>
<div class="t" style="transform:scaleX(0.9676);left:134px;top:529px;font-size:13px;line-height:13px;color:#c8c8c8;font-weight:normal;">2</div>
<div class="a" style="left:7px;top:549px;width:17px;height:17px;background:#1e1e1e;"></div>
<svg class="a" style="left:8px;top:552px;" width="16" height="12" viewBox="0 0 16 12"><path d="M1 6 Q8 -1 15 6 Q8 13 1 6 Z" fill="#b4b4b4"/><circle cx="8" cy="6" r="2.6" fill="#232323"/></svg>
<div class="a" style="left:44px;top:549px;width:16px;height:17px;background:#1e1e1e;"></div>
<div class="a" style="left:63px;top:549px;width:16px;height:17px;background:#1e1e1e;"></div>
<svg class="a" style="left:95px;top:553px;" width="6" height="10" viewBox="0 0 6 10"><path d="M1 1 L5 5 L1 9" stroke="#9a9a9a" stroke-width="1.1" fill="none"/></svg>
<div class="a" style="left:108px;top:549px;width:18px;height:17px;background:#c83b3b;"></div>
<div class="t" style="transform:scaleX(0.9676);left:134px;top:552px;font-size:13px;line-height:13px;color:#c8c8c8;font-weight:normal;">3</div>
<svg class="a" style="left:169px;top:527px;" width="17" height="16" viewBox="0 0 17 16"><path d="M8.5 1 L10.7 6 L16 6.3 L11.9 9.8 L13.2 15 L8.5 12.1 L3.8 15 L5.1 9.8 L1 6.3 L6.3 6 Z" fill="#b4b4b4"/></svg>
<div class="t" style="transform:scaleX(0.9404);left:194px;top:530px;font-size:13px;line-height:13px;color:#c8c8c8;font-weight:normal;">シェイプレイヤー 2</div>
<div class="a" style="left:167px;top:549px;width:19px;height:19px;background:#ffffff;border:1px solid #111"></div>
<div class="t" style="transform:scaleX(1.0060);left:195px;top:552px;font-size:14px;line-height:14px;color:#c8c8c8;font-weight:normal;">[ホワイト 平面 1]</div>
<div class="a" style="left:742px;top:124px;width:473px;height:17px;background:#1e1e1e;"></div>
<div class="a" style="left:742px;top:141px;width:473px;height:44px;background:#1f1f1f;"></div>
<div class="a" style="left:855px;top:129px;width:360px;height:11px;background:#46423b;"></div>
<div class="a" style="left:750px;top:129px;width:97px;height:11px;background:#777;"></div>
<div class="a" style="left:743px;top:129px;width:10px;height:11px;background:#2d8ceb;border-radius:5px 0 0 5px"></div>
<div class="a" style="left:846px;top:129px;width:9px;height:11px;background:#2d8ceb;border-radius:0 5px 5px 0"></div>
<div class="a" style="left:752px;top:130px;width:1px;height:9px;background:#999;"></div>
<div class="a" style="left:845px;top:130px;width:1px;height:9px;background:#222;"></div>
<div class="t" style="transform:scaleX(0.9737);left:742px;top:144.5px;font-size:12px;line-height:12px;color:#bcbcbc;font-weight:normal;">0:00f</div>
<div class="t" style="transform:scaleX(1.2584);left:804px;top:144.5px;font-size:12px;line-height:12px;color:#bcbcbc;font-weight:normal;">10f</div>
<div class="t" style="transform:scaleX(1.1985);left:869px;top:144.5px;font-size:12px;line-height:12px;color:#bcbcbc;font-weight:normal;">20f</div>
<div class="t" style="transform:scaleX(1.1985);left:923px;top:144.5px;font-size:12px;line-height:12px;color:#bcbcbc;font-weight:normal;">01:00f</div>
<div class="t" style="transform:scaleX(1.2584);left:998px;top:144.5px;font-size:12px;line-height:12px;color:#bcbcbc;font-weight:normal;">10f</div>
<div class="t" style="transform:scaleX(1.2584);left:1062px;top:144.5px;font-size:12px;line-height:12px;color:#bcbcbc;font-weight:normal;">20f</div>
<div class="t" style="transform:scaleX(1.1985);left:1118px;top:144.5px;font-size:12px;line-height:12px;color:#bcbcbc;font-weight:normal;">02:00f</div>
<div class="t" style="transform:scaleX(1.2584);left:1191px;top:144.5px;font-size:12px;line-height:12px;color:#bcbcbc;font-weight:normal;">10f</div>
<div class="a" style="left:816px;top:158px;width:1px;height:14px;background:#8a8a8a;"></div>
<div class="a" style="left:880px;top:158px;width:1px;height:14px;background:#8a8a8a;"></div>
<div class="a" style="left:945px;top:158px;width:1px;height:14px;background:#8a8a8a;"></div>
<div class="a" style="left:1010px;top:158px;width:1px;height:14px;background:#8a8a8a;"></div>
<div class="a" style="left:1075px;top:158px;width:1px;height:14px;background:#8a8a8a;"></div>
<div class="a" style="left:1140px;top:158px;width:1px;height:14px;background:#8a8a8a;"></div>
<div class="a" style="left:1204px;top:158px;width:1px;height:14px;background:#8a8a8a;"></div>
<div class="a" style="left:742px;top:184px;width:473px;height:2px;background:#0a0a0a;"></div>
<div class="a" style="left:752px;top:186px;width:463px;height:4px;background:#1414c8;"></div>
<div class="a" style="left:752px;top:186px;width:6px;height:4px;background:#22cc22;"></div>
<div class="a" style="left:952px;top:186px;width:6px;height:4px;background:#22cc22;"></div>
<div class="a" style="left:742px;top:191px;width:9px;height:22px;background:#3a3a3a;"></div>
<div class="a" style="left:751px;top:191px;width:464px;height:21px;background:linear-gradient(to bottom,#a4acde 0,#a4acde 1.5px,#6a78da 2px,#5c6ad4 100%)"></div>
<div class="a" style="left:751px;top:212px;width:464px;height:1px;background:#3a3a3a;"></div>
<div class="a" style="left:751px;top:524px;width:464px;height:20px;background:#4b5488;"></div>
<div class="a" style="left:751px;top:548px;width:464px;height:20px;background:#743135;"></div>
<svg class="a" style="left:746px;top:217px;" width="11" height="15" viewBox="0 0 11 15"><rect x="3.6" y="1.5" width="4.2" height="12.5" fill="#1e1e1e" stroke="#b8b8b8" stroke-width="1.1"/><path d="M0.8 1.3 H10.2 M0.8 14.2 H10.2" stroke="#c0c0c0" stroke-width="1.7"/></svg>
<svg class="a" style="left:746px;top:241px;" width="11" height="15" viewBox="0 0 11 15"><rect x="3.6" y="1.5" width="4.2" height="12.5" fill="#1e1e1e" stroke="#b8b8b8" stroke-width="1.1"/><path d="M0.8 1.3 H10.2 M0.8 14.2 H10.2" stroke="#c0c0c0" stroke-width="1.7"/></svg>
<svg class="a" style="left:746px;top:265px;" width="11" height="15" viewBox="0 0 11 15"><rect x="3.6" y="1.5" width="4.2" height="12.5" fill="#1e1e1e" stroke="#b8b8b8" stroke-width="1.1"/><path d="M0.8 1.3 H10.2 M0.8 14.2 H10.2" stroke="#c0c0c0" stroke-width="1.7"/></svg>
<svg class="a" style="left:746px;top:313px;" width="11" height="15" viewBox="0 0 11 15"><rect x="3.6" y="1.5" width="4.2" height="12.5" fill="#1e1e1e" stroke="#b8b8b8" stroke-width="1.1"/><path d="M0.8 1.3 H10.2 M0.8 14.2 H10.2" stroke="#c0c0c0" stroke-width="1.7"/></svg>
<svg class="a" style="left:746px;top:360px;" width="11" height="15" viewBox="0 0 11 15"><rect x="3.6" y="1.5" width="4.2" height="12.5" fill="#1e1e1e" stroke="#b8b8b8" stroke-width="1.1"/><path d="M0.8 1.3 H10.2 M0.8 14.2 H10.2" stroke="#c0c0c0" stroke-width="1.7"/></svg>
<svg class="a" style="left:746px;top:384px;" width="11" height="15" viewBox="0 0 11 15"><rect x="3.6" y="1.5" width="4.2" height="12.5" fill="#1e1e1e" stroke="#b8b8b8" stroke-width="1.1"/><path d="M0.8 1.3 H10.2 M0.8 14.2 H10.2" stroke="#c0c0c0" stroke-width="1.7"/></svg>
<svg class="a" style="left:746px;top:408px;" width="11" height="15" viewBox="0 0 11 15"><rect x="3.6" y="1.5" width="4.2" height="12.5" fill="#1e1e1e" stroke="#b8b8b8" stroke-width="1.1"/><path d="M0.8 1.3 H10.2 M0.8 14.2 H10.2" stroke="#c0c0c0" stroke-width="1.7"/></svg>
<svg class="a" style="left:746px;top:432px;" width="11" height="15" viewBox="0 0 11 15"><rect x="3.6" y="1.5" width="4.2" height="12.5" fill="#1e1e1e" stroke="#b8b8b8" stroke-width="1.1"/><path d="M0.8 1.3 H10.2 M0.8 14.2 H10.2" stroke="#c0c0c0" stroke-width="1.7"/></svg>
<svg class="a" style="left:746px;top:455px;" width="11" height="15" viewBox="0 0 11 15"><rect x="3.6" y="1.5" width="4.2" height="12.5" fill="#1e1e1e" stroke="#b8b8b8" stroke-width="1.1"/><path d="M0.8 1.3 H10.2 M0.8 14.2 H10.2" stroke="#c0c0c0" stroke-width="1.7"/></svg>
<svg class="a" style="left:746px;top:479px;" width="11" height="15" viewBox="0 0 11 15"><rect x="3.6" y="1.5" width="4.2" height="12.5" fill="#1e1e1e" stroke="#b8b8b8" stroke-width="1.1"/><path d="M0.8 1.3 H10.2 M0.8 14.2 H10.2" stroke="#c0c0c0" stroke-width="1.7"/></svg>
<svg class="a" style="left:746px;top:503px;" width="11" height="15" viewBox="0 0 11 15"><rect x="3.6" y="1.5" width="4.2" height="12.5" fill="#1e1e1e" stroke="#b8b8b8" stroke-width="1.1"/><path d="M0.8 1.3 H10.2 M0.8 14.2 H10.2" stroke="#c0c0c0" stroke-width="1.7"/></svg>
<svg class="a" style="left:746px;top:291px;" width="12" height="12" viewBox="0 0 12 12"><path d="M6 1 L11 6 L6 11 L1 6 Z" fill="#b4b4b4"/></svg>
<svg class="a" style="left:933px;top:291px;" width="12" height="12" viewBox="0 0 12 12"><path d="M6 1 L11 6 L6 11 L1 6 Z" fill="#b4b4b4"/></svg>
<svg class="a" style="left:1128px;top:291px;" width="12" height="12" viewBox="0 0 12 12"><path d="M6 1 L11 6 L6 11 L1 6 Z" fill="#b4b4b4"/></svg>
<svg class="a" style="left:746px;top:338px;" width="12" height="12" viewBox="0 0 12 12"><path d="M6 1 L11 6 L6 11 L1 6 Z" fill="#b4b4b4"/></svg>
<svg class="a" style="left:933px;top:338px;" width="12" height="12" viewBox="0 0 12 12"><path d="M6 1 L11 6 L6 11 L1 6 Z" fill="#b4b4b4"/></svg>
<svg class="a" style="left:1128px;top:338px;" width="12" height="12" viewBox="0 0 12 12"><path d="M6 1 L11 6 L6 11 L1 6 Z" fill="#b4b4b4"/></svg>
<div class="a" style="left:751px;top:160px;width:1px;height:750px;background:#2d8ceb;"></div>
<svg class="a" style="left:744px;top:146px;" width="15" height="19" viewBox="0 0 15 19"><path d="M1 1 H14 V9 L7.5 18 L1 9 Z" fill="#2d8ceb"/><path d="M7.5 9 V15" stroke="#1b3552" stroke-width="1"/></svg>
<div class="a" style="left:135px;top:400px;width:115px;height:124px;border:2px solid #ff00ff;border-radius:11px"></div>
<div class="a" style="left:289px;top:197px;width:306px;height:658px;background:#f0f0f0;border:1px solid #cfcfcf;box-shadow:1px 1px 2px rgba(0,0,0,.35)"></div>
<div class="t" style="transform:scaleX(0.7292);left:327px;top:203.5px;font-size:16px;line-height:16px;color:#000;font-weight:normal;-webkit-text-stroke:0.2px #000">マスク</div>
<svg class="a" style="left:576px;top:207px;" width="8" height="10" viewBox="0 0 8 10"><path d="M1.5 1 L5.5 5 L1.5 9" stroke="#333" stroke-width="1.3" fill="none"/></svg>
<div class="t" style="transform:scaleX(0.7386);left:327px;top:227.5px;font-size:16px;line-height:16px;color:#000;font-weight:normal;-webkit-text-stroke:0.2px #000">マスクとシェイプのパス</div>
<svg class="a" style="left:576px;top:231px;" width="8" height="10" viewBox="0 0 8 10"><path d="M1.5 1 L5.5 5 L1.5 9" stroke="#333" stroke-width="1.3" fill="none"/></svg>
<div class="t" style="transform:scaleX(0.9688);left:327px;top:251.5px;font-size:16px;line-height:16px;color:#000;font-weight:normal;-webkit-text-stroke:0.2px #000">画質</div>
<svg class="a" style="left:576px;top:255px;" width="8" height="10" viewBox="0 0 8 10"><path d="M1.5 1 L5.5 5 L1.5 9" stroke="#333" stroke-width="1.3" fill="none"/></svg>
<div class="t" style="transform:scaleX(0.7188);left:327px;top:275.5px;font-size:16px;line-height:16px;color:#000;font-weight:normal;-webkit-text-stroke:0.2px #000">スイッチ</div>
<svg class="a" style="left:576px;top:279px;" width="8" height="10" viewBox="0 0 8 10"><path d="M1.5 1 L5.5 5 L1.5 9" stroke="#333" stroke-width="1.3" fill="none"/></svg>
<div class="t" style="transform:scaleX(0.7031);left:327px;top:299.5px;font-size:16px;line-height:16px;color:#000;font-weight:normal;-webkit-text-stroke:0.2px #000">トランスフォーム</div>
<svg class="a" style="left:576px;top:303px;" width="8" height="10" viewBox="0 0 8 10"><path d="M1.5 1 L5.5 5 L1.5 9" stroke="#333" stroke-width="1.3" fill="none"/></svg>
<div class="t" style="transform:scaleX(0.9688);left:327px;top:323.5px;font-size:16px;line-height:16px;color:#000;font-weight:normal;-webkit-text-stroke:0.2px #000">時間</div>
<svg class="a" style="left:576px;top:327px;" width="8" height="10" viewBox="0 0 8 10"><path d="M1.5 1 L5.5 5 L1.5 9" stroke="#333" stroke-width="1.3" fill="none"/></svg>
<div class="t" style="transform:scaleX(0.7031);left:327px;top:347.5px;font-size:16px;line-height:16px;color:#000;font-weight:normal;-webkit-text-stroke:0.2px #000">フレームブレンド</div>
<svg class="a" style="left:576px;top:351px;" width="8" height="10" viewBox="0 0 8 10"><path d="M1.5 1 L5.5 5 L1.5 9" stroke="#333" stroke-width="1.3" fill="none"/></svg>
<div class="t" style="transform:scaleX(0.7815);left:327px;top:371.5px;font-size:16px;line-height:16px;color:#000;font-weight:normal;-webkit-text-stroke:0.2px #000">3Dレイヤー</div>
<div class="t" style="transform:scaleX(0.7232);left:327px;top:395.5px;font-size:16px;line-height:16px;color:#000;font-weight:normal;-webkit-text-stroke:0.2px #000">ガイドレイヤー</div>
<div class="t" style="transform:scaleX(0.8021);left:327px;top:419.5px;font-size:16px;line-height:16px;color:#7c7c7c;font-weight:normal;-webkit-text-stroke:0.2px #7c7c7c">環境レイヤー</div>
<div class="t" style="transform:scaleX(0.7812);left:327px;top:443.5px;font-size:16px;line-height:16px;color:#000;font-weight:normal;-webkit-text-stroke:0.2px #000">マーカー</div>
<svg class="a" style="left:576px;top:447px;" width="8" height="10" viewBox="0 0 8 10"><path d="M1.5 1 L5.5 5 L1.5 9" stroke="#333" stroke-width="1.3" fill="none"/></svg>
<div class="t" style="transform:scaleX(0.8250);left:327px;top:467.5px;font-size:16px;line-height:16px;color:#000;font-weight:normal;-webkit-text-stroke:0.2px #000">描画モード</div>
<svg class="a" style="left:576px;top:471px;" width="8" height="10" viewBox="0 0 8 10"><path d="M1.5 1 L5.5 5 L1.5 9" stroke="#333" stroke-width="1.3" fill="none"/></svg>
<div class="a" style="left:292px;top:487px;width:297px;height:24px;background:#91c9f7;"></div>
<div class="t" style="transform:scaleX(0.7266);left:327px;top:491.5px;font-size:16px;line-height:16px;color:#000;font-weight:normal;-webkit-text-stroke:0.2px #000">レイヤースタイル</div>
<svg class="a" style="left:576px;top:495px;" width="8" height="10" viewBox="0 0 8 10"><path d="M1.5 1 L5.5 5 L1.5 9" stroke="#333" stroke-width="1.3" fill="none"/></svg>
<div class="a" style="left:322px;top:515px;width:270px;height:1px;background:#d6d6d6;"></div>
<div class="t" style="transform:scaleX(0.7000);left:327px;top:522.5px;font-size:16px;line-height:16px;color:#000;font-weight:normal;-webkit-text-stroke:0.2px #000">エフェクト</div>
<svg class="a" style="left:576px;top:526px;" width="8" height="10" viewBox="0 0 8 10"><path d="M1.5 1 L5.5 5 L1.5 9" stroke="#333" stroke-width="1.3" fill="none"/></svg>
<div class="t" style="transform:scaleX(0.7656);left:327px;top:546.5px;font-size:16px;line-height:16px;color:#000;font-weight:normal;-webkit-text-stroke:0.2px #000">キーフレーム補助</div>
<svg class="a" style="left:576px;top:550px;" width="8" height="10" viewBox="0 0 8 10"><path d="M1.5 1 L5.5 5 L1.5 9" stroke="#333" stroke-width="1.3" fill="none"/></svg>
<div class="t" style="transform:scaleX(0.7159);left:327px;top:570.5px;font-size:16px;line-height:16px;color:#000;font-weight:normal;-webkit-text-stroke:0.2px #000">トラックとスタビライズ</div>
<svg class="a" style="left:576px;top:574px;" width="8" height="10" viewBox="0 0 8 10"><path d="M1.5 1 L5.5 5 L1.5 9" stroke="#333" stroke-width="1.3" fill="none"/></svg>
<div class="a" style="left:322px;top:594px;width:270px;height:1px;background:#d6d6d6;"></div>
<div class="t" style="transform:scaleX(0.8438);left:327px;top:601.5px;font-size:16px;line-height:16px;color:#000;font-weight:normal;-webkit-text-stroke:0.2px #000">開く</div>
<svg class="a" style="left:576px;top:605px;" width="8" height="10" viewBox="0 0 8 10"><path d="M1.5 1 L5.5 5 L1.5 9" stroke="#333" stroke-width="1.3" fill="none"/></svg>
<div class="t" style="transform:scaleX(0.9375);left:327px;top:625.5px;font-size:16px;line-height:16px;color:#000;font-weight:normal;-webkit-text-stroke:0.2px #000">表示</div>
<svg class="a" style="left:576px;top:629px;" width="8" height="10" viewBox="0 0 8 10"><path d="M1.5 1 L5.5 5 L1.5 9" stroke="#333" stroke-width="1.3" fill="none"/></svg>
<div class="t" style="transform:scaleX(0.9375);left:327px;top:649.5px;font-size:16px;line-height:16px;color:#000;font-weight:normal;-webkit-text-stroke:0.2px #000">作成</div>
<svg class="a" style="left:576px;top:653px;" width="8" height="10" viewBox="0 0 8 10"><path d="M1.5 1 L5.5 5 L1.5 9" stroke="#333" stroke-width="1.3" fill="none"/></svg>
<div class="a" style="left:322px;top:673px;width:270px;height:1px;background:#d6d6d6;"></div>
<div class="t" style="transform:scaleX(0.7083);left:327px;top:680.5px;font-size:16px;line-height:16px;color:#000;font-weight:normal;-webkit-text-stroke:0.2px #000">カメラ</div>
<svg class="a" style="left:576px;top:684px;" width="8" height="10" viewBox="0 0 8 10"><path d="M1.5 1 L5.5 5 L1.5 9" stroke="#333" stroke-width="1.3" fill="none"/></svg>
<div class="t" style="transform:scaleX(0.7260);left:327px;top:704.5px;font-size:16px;line-height:16px;color:#000;font-weight:normal;-webkit-text-stroke:0.2px #000">プリコンポーズ...</div>
<div class="a" style="left:322px;top:728px;width:270px;height:1px;background:#d6d6d6;"></div>
<div class="t" style="transform:scaleX(0.8472);left:327px;top:735.5px;font-size:16px;line-height:16px;color:#000;font-weight:normal;-webkit-text-stroke:0.2px #000">選択アイテムを反転</div>
<div class="t" style="transform:scaleX(0.9375);left:327px;top:759.5px;font-size:16px;line-height:16px;color:#000;font-weight:normal;-webkit-text-stroke:0.2px #000">子を選択</div>
<div class="t" style="transform:scaleX(0.9500);left:327px;top:783.5px;font-size:16px;line-height:16px;color:#000;font-weight:normal;-webkit-text-stroke:0.2px #000">名前を変更</div>
<div class="t" style="transform:scaleX(0.7610);left:327px;top:807.5px;font-size:16px;line-height:16px;color:#7c7c7c;font-weight:normal;-webkit-text-stroke:0.2px #7c7c7c">エッセンシャルグラフィックスに追加</div>
<div class="t" style="transform:scaleX(0.8561);left:327px;top:831.5px;font-size:16px;line-height:16px;color:#7c7c7c;font-weight:normal;-webkit-text-stroke:0.2px #7c7c7c">シーン編集の検出...</div>
<div class="a" style="left:589px;top:485px;width:268px;height:301px;background:#f0f0f0;border:1px solid #a8a8a8;box-shadow:1px 1px 2px rgba(0,0,0,.35)"></div>
<div class="t" style="transform:scaleX(0.8854);left:627px;top:491.5px;font-size:16px;line-height:16px;color:#000;font-weight:normal;-webkit-text-stroke:0.2px #000">編集可能なスタイルに変換</div>
<div class="t" style="transform:scaleX(0.8333);left:627px;top:515.5px;font-size:16px;line-height:16px;color:#000;font-weight:normal;-webkit-text-stroke:0.2px #000">すべてを表示</div>
<div class="t" style="transform:scaleX(0.8333);left:627px;top:539.5px;font-size:16px;line-height:16px;color:#000;font-weight:normal;-webkit-text-stroke:0.2px #000">すべてを削除</div>
<div class="a" style="left:622px;top:563px;width:232px;height:1px;background:#d6d6d6;"></div>
<div class="t" style="transform:scaleX(0.7266);left:627px;top:570.5px;font-size:16px;line-height:16px;color:#000;font-weight:normal;-webkit-text-stroke:0.2px #000">ドロップシャドウ</div>
<div class="t" style="transform:scaleX(0.8280);left:627px;top:594.5px;font-size:16px;line-height:16px;color:#000;font-weight:normal;-webkit-text-stroke:0.2px #000">シャドウ (内側)</div>
<div class="t" style="transform:scaleX(0.9733);left:627px;top:618.5px;font-size:16px;line-height:16px;color:#000;font-weight:normal;-webkit-text-stroke:0.2px #000">光彩 (外側)</div>
<div class="t" style="transform:scaleX(0.9733);left:627px;top:642.5px;font-size:16px;line-height:16px;color:#000;font-weight:normal;-webkit-text-stroke:0.2px #000">光彩 (内側)</div>
<div class="t" style="transform:scaleX(0.7734);left:627px;top:666.5px;font-size:16px;line-height:16px;color:#000;font-weight:normal;-webkit-text-stroke:0.2px #000">ベベルとエンボス</div>
<div class="t" style="transform:scaleX(0.7083);left:627px;top:690.5px;font-size:16px;line-height:16px;color:#000;font-weight:normal;-webkit-text-stroke:0.2px #000">サテン</div>
<div class="t" style="transform:scaleX(0.7014);left:627px;top:714.5px;font-size:16px;line-height:16px;color:#000;font-weight:normal;-webkit-text-stroke:0.2px #000">カラーオーバーレイ</div>
<div class="t" style="transform:scaleX(0.7163);left:627px;top:738.5px;font-size:16px;line-height:16px;color:#000;font-weight:normal;-webkit-text-stroke:0.2px #000">グラデーションオーバーレイ</div>
<div class="a" style="left:593px;top:758px;width:261px;height:24px;background:#91c9f7;"></div>
<div class="t" style="transform:scaleX(0.9792);left:627px;top:762.5px;font-size:16px;line-height:16px;color:#000;font-weight:normal;-webkit-text-stroke:0.2px #000">境界線</div>
<svg class="a" style="left:420px;top:488px;" width="40" height="55" viewBox="0 0 40 55"><path d="M7 5 L30.5 33 L20 32.5 L25.5 48.5 L19 49.5 L15 34 L7 42 Z" fill="#ff00ff"/></svg>
<svg class="a" style="left:435px;top:532px;" width="56" height="56" viewBox="0 0 56 56"><circle cx="28" cy="28.5" r="21.5" fill="none" stroke="#ff00ff" stroke-width="2.2"/><path d="M27.5 13 V45 M27.5 13 Q23 18 18 17.5" stroke="#ff00ff" stroke-width="3.2" fill="none"/></svg>
<svg class="a" style="left:760px;top:760px;" width="40" height="55" viewBox="0 0 40 55"><path d="M7 5 L30.5 33 L20 32.5 L25.5 48.5 L19 49.5 L15 34 L7 42 Z" fill="#ff00ff"/></svg>
<svg class="a" style="left:783px;top:808px;" width="56" height="56" viewBox="0 0 56 56"><circle cx="27.5" cy="27.5" r="22" fill="none" stroke="#ff00ff" stroke-width="2.2"/><path d="M18 20 Q19 12 27.5 12 Q36 12 36 19.5 Q36 25 27 31.5 L18 41 L38 41" stroke="#ff00ff" stroke-width="3" fill="none"/></svg></body></html>
